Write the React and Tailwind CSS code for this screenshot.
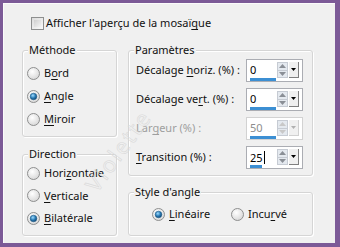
function Radio({ checked }) {
  return (
    <svg width="13" height="13" viewBox="0 0 13 13" className="shrink-0">
      <defs>
        <radialGradient id="rbg" cx="0.4" cy="0.35" r="0.7">
          <stop offset="0" stopColor="#ffffff" />
          <stop offset="1" stopColor="#d6d6d6" />
        </radialGradient>
        <radialGradient id="rdot" cx="0.4" cy="0.35" r="0.7">
          <stop offset="0" stopColor="#9fdcff" />
          <stop offset="0.55" stopColor="#2a7bb5" />
          <stop offset="1" stopColor="#0e3f66" />
        </radialGradient>
      </defs>
      <circle cx="6.5" cy="6.5" r="6" fill="url(#rbg)" stroke="#8e8f8f" strokeWidth="1" />
      {checked && <circle cx="6.5" cy="6.5" r="3.3" fill="url(#rdot)" stroke="#1d5c8c" strokeWidth="0.6" />}
    </svg>
  );
}

function RadioRow({ checked, children, className = "" }) {
  return (
    <div className={"flex items-center gap-[4px] " + className}>
      <Radio checked={checked} />
      <span>{children}</span>
    </div>
  );
}

function U({ children }) {
  return <span className="underline underline-offset-[2px]">{children}</span>;
}

// win7 style group box, caption sits on the top border
function Group({ title, className = "", children }) {
  return (
    <div
      className={
        "rounded-[3px] border border-[#d5d5d5] shadow-[inset_1px_1px_0_#ffffff,1px_1px_0_#ffffff] " + className
      }
    >
      <div className="-mt-[9px] ml-[5px] w-fit bg-[#f0f0f0] px-[1px] leading-[16px]">{title}</div>
      {children}
    </div>
  );
}

function Spin({ value, fill, disabled }) {
  return (
    <div
      className={
        "flex h-[23px] w-[57px] border bg-white " + (disabled ? "border-[#d2d2d2]" : "border-[#abadb3]")
      }
    >
      <div className="flex w-[30px] flex-col pl-[3px] pt-[2px]">
        <span className={"h-[15px] leading-[15px] " + (disabled ? "text-[#8d8d8d]" : "text-black")}>{value}</span>
        <div className="mt-[1px] h-[3px] bg-[#3c8fd3]" style={{ width: fill }} />
      </div>
      <div className="mt-[2px] flex h-[16px] w-[11px] flex-col border border-[#c6cbd3]">
        <div className="flex flex-1 items-center justify-center border-b border-[#c6cbd3] bg-[#e4e9ef]">
          <svg width="7" height="4" viewBox="0 0 7 4">
            <path d="M0 4 L3.5 0 L7 4 Z" fill={disabled ? "#c8c8c8" : "#8a8f96"} />
          </svg>
        </div>
        <div className="flex flex-1 items-center justify-center bg-[#e4e9ef]">
          <svg width="7" height="4" viewBox="0 0 7 4">
            <path d="M0 0 L3.5 4 L7 0 Z" fill={disabled ? "#c8c8c8" : "#8a8f96"} />
          </svg>
        </div>
      </div>
      <div
        className={
          "mt-[2px] ml-[1px] flex h-[16px] w-[10px] items-center justify-center border-r border-b bg-[#f0f0f0] " +
          (disabled ? "border-[#d0d0d0]" : "border-[#808080]")
        }
      >
        <svg width="5" height="3" viewBox="0 0 5 3">
          <path d="M0 0 L2.5 3 L5 0 Z" fill={disabled ? "#b0b0b0" : "#000000"} />
        </svg>
      </div>
    </div>
  );
}

function ParamRow({ label, value, fill, disabled }) {
  return (
    <div className="flex h-[23px] items-center">
      <span className={"w-[110px] whitespace-nowrap " + (disabled ? "text-[#9e9e9e]" : "")}>{label}</span>
      <Spin value={value} fill={fill} disabled={disabled} />
    </div>
  );
}

export default function App() {
  return (
    <div className="h-[247px] w-[340px] bg-[#7c5a97] pb-[4px] pl-[3px] pr-[5px] pt-[3px] font-['Noto_Sans',sans-serif] text-[11px] text-[#111]">
      <div className="relative h-full w-full overflow-hidden bg-[#f0f0f0] pl-[19px] pt-[14px] shadow-[inset_1px_1px_0_#fbfbfb]">
        <div className="ml-[9px] flex h-[13px] items-center gap-[2px]">
          <div className="h-[13px] w-[13px] border border-[#8e8f8f] bg-gradient-to-br from-[#dcdcdc] to-[#fafafa] p-[2px]">
            <div className="h-full w-full bg-gradient-to-br from-[#cfcfcf] to-[#f4f4f4]" />
          </div>
          <span>
            Afficher l'aperçu de la mosaï<U>q</U>ue
          </span>
        </div>

        <div className="mt-[20px] flex gap-[11px]">
          <div className="flex w-[95px] flex-col gap-[17px]">
            <Group title="Méthode" className="h-[87px]">
              <div className="pl-[4px] pt-[4px]">
                <RadioRow className="h-[23px]">
                  B<U>o</U>rd
                </RadioRow>
                <RadioRow checked className="h-[23px]">
                  <U>A</U>ngle
                </RadioRow>
                <RadioRow className="h-[23px]">
                  <U>M</U>iroir
                </RadioRow>
              </div>
            </Group>
            <Group title="Direction" className="h-[82px]">
              <div className="pl-[4px]">
                <RadioRow className="h-[22.5px]">
                  Hori<U>z</U>ontale
                </RadioRow>
                <RadioRow className="h-[22.5px]">
                  <U>V</U>erticale
                </RadioRow>
                <RadioRow checked className="h-[22.5px]">
                  <U>B</U>ilatérale
                </RadioRow>
              </div>
            </Group>
          </div>

          <div className="flex w-[185px] flex-col gap-[16px]">
            <Group title="Paramètres" className="h-[126px]">
              <div className="flex flex-col gap-[6px] pl-[7px] pt-[1px]">
                <ParamRow
                  label={
                    <>
                      Décalage <U>h</U>oriz. (%) :
                    </>
                  }
                  value="0"
                  fill="26px"
                />
                <ParamRow
                  label={
                    <>
                      Décalage ve<U>r</U>t. (%) :
                    </>
                  }
                  value="0"
                  fill="26px"
                />
                <ParamRow
                  label={
                    <>
                      Lar<U>g</U>eur (%) :
                    </>
                  }
                  value="50"
                  fill="26px"
                  disabled
                />
                <ParamRow
                  label={
                    <>
                      <U>T</U>ransition (%) :
                    </>
                  }
                  value={
                    <>
                      25<span className="ml-[1px] inline-block h-[13px] w-[1px] translate-y-[2px] bg-black" />
                    </>
                  }
                  fill="12px"
                />
              </div>
            </Group>
            <Group title="Style d'angle" className="h-[44px]">
              <div className="flex h-[16px] items-center pl-[23px] mt-[6px]">
                <RadioRow checked className="w-[79px]">
                  <U>L</U>inéaire
                </RadioRow>
                <RadioRow>
                  Incu<U>r</U>vé
                </RadioRow>
              </div>
            </Group>
          </div>
        </div>

        <div className="pointer-events-none absolute left-[45px] top-[131px] w-[140px] -rotate-[54deg] text-center text-[22px] tracking-[2px] text-transparent [-webkit-text-stroke:0.6px_#dadada]">
          Violette
        </div>
      </div>
    </div>
  );
}
